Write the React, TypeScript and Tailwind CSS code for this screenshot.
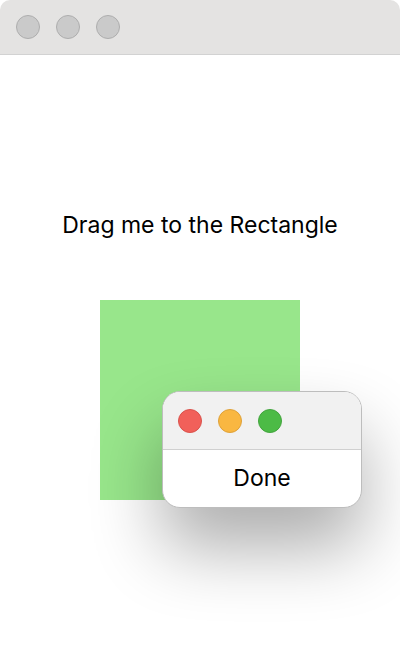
import React from "react";

export default function App() {
  return (
    <div className="w-[400px] h-[654px] bg-white overflow-hidden rounded-[10px] relative" style={{ fontFamily: "Inter, 'Noto Sans', sans-serif" }}>
      <div className="h-[55px] bg-[#e4e3e2] border-b border-[#d2d2d2] flex items-center gap-[16px] pl-[16px]">
        <div className="w-[24px] h-[24px] rounded-full bg-[#cacaca] border border-[#aeaeae]" />
        <div className="w-[24px] h-[24px] rounded-full bg-[#cacaca] border border-[#aeaeae]" />
        <div className="w-[24px] h-[24px] rounded-full bg-[#cacaca] border border-[#aeaeae]" />
      </div>
      <div className="flex flex-col items-center">
        <div className="mt-[155px] text-[23px] leading-[30px] text-black">Drag me to the Rectangle</div>
        <div className="mt-[60px] w-[200px] h-[200px] bg-[#98e68b]" />
      </div>
      <div className="absolute left-[162px] top-[391px] w-[200px] h-[117px] rounded-[18px] overflow-hidden border border-[#bdbdbd] bg-white shadow-[0_40px_70px_rgba(0,0,0,0.32)] flex flex-col">
        <div className="h-[58px] bg-[#f1f1f1] border-b border-[#d0d0d0] flex items-center gap-[16px] pl-[15px]">
          <div className="w-[24px] h-[24px] rounded-full bg-[#f1605a] border border-[#d9524c]" />
          <div className="w-[24px] h-[24px] rounded-full bg-[#f9b741] border border-[#dea13a]" />
          <div className="w-[24px] h-[24px] rounded-full bg-[#4cbb46] border border-[#43a43e]" />
        </div>
        <div className="flex-1 flex items-center justify-center text-[23px] text-black">Done</div>
      </div>
    </div>
  );
}
